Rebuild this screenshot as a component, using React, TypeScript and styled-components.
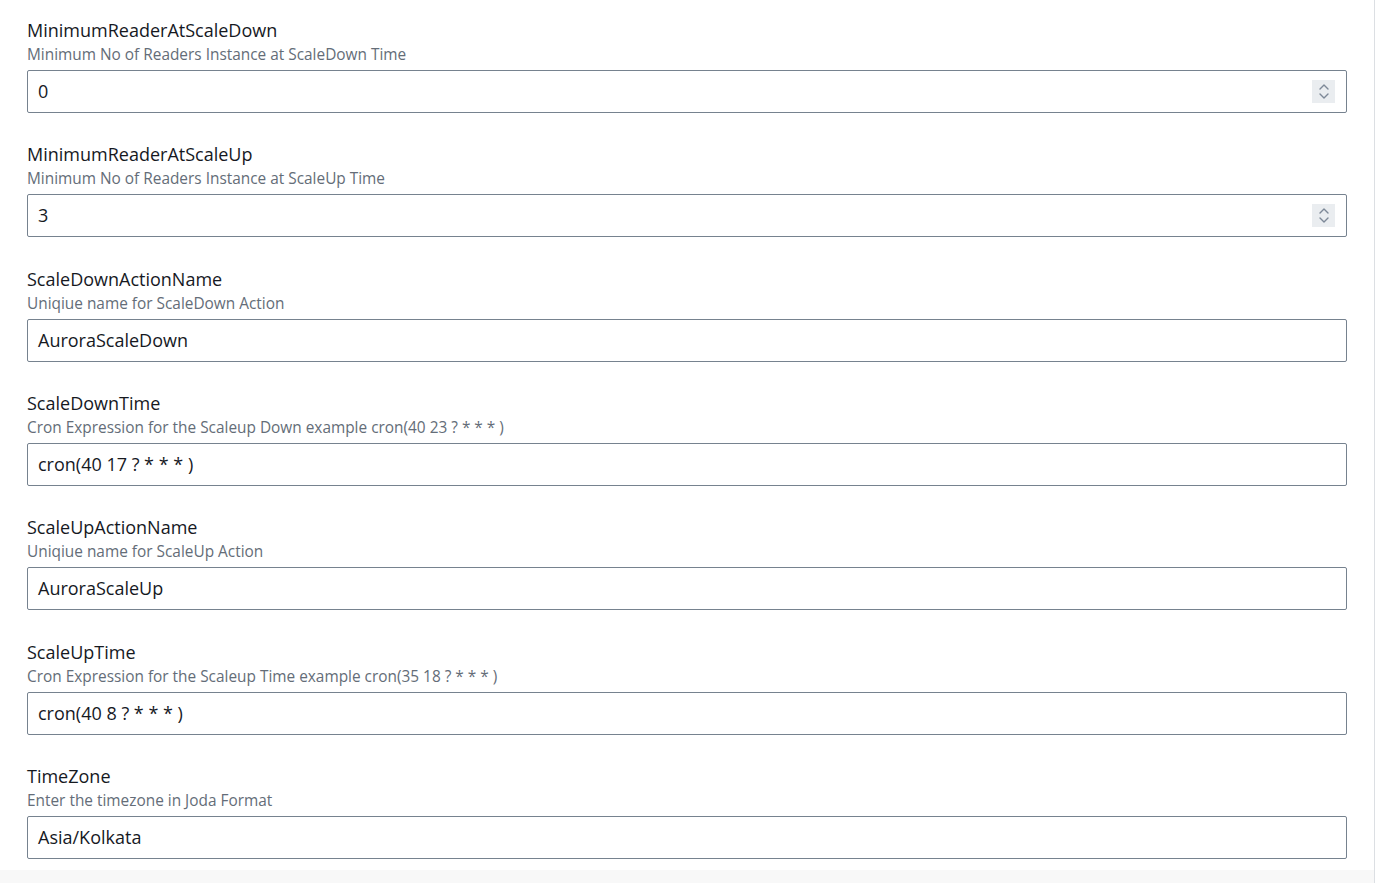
import styled, { createGlobalStyle } from "styled-components";

const GlobalStyle = createGlobalStyle`
  html, body {
    margin: 0;
    padding: 0;
    background: #ffffff;
  }
  body {
    font-family: "Open Sans", "Noto Sans", sans-serif;
    color: #16191f;
  }
`;

const Screen = styled.div`
  width: 1378px;
  height: 883px;
  display: flex;
  flex-direction: column;
  overflow: hidden;
`;

const Panel = styled.div`
  width: 1375px;
  height: 870px;
  flex-shrink: 0;
  border-right: 1px solid #dcdfe3;
  background: #ffffff;
  display: flex;
  flex-direction: column;
  padding: 19px 27px 0 27px;
  box-sizing: border-box;
`;

const Bottom = styled.div`
  width: 1375px;
  flex: 1;
  box-sizing: border-box;
  background: #f8f8f8;
  border-right: 1px solid #dcdfe3;
`;

const Field = styled.div`
  display: flex;
  flex-direction: column;
  margin-bottom: 30.33px;
`;

const Label = styled.div`
  font-size: 18px;
  line-height: 22px;
  color: #16191f;
`;

const Description = styled.div`
  font-size: 15.4px;
  line-height: 22px;
  margin-top: 3px;
  color: #646d78;
`;

const InputBox = styled.div`
  position: relative;
  margin-top: 4px;
  height: 43px;
  box-sizing: border-box;
  border: 1px solid #76828f;
  border-radius: 2px;
  display: flex;
  align-items: center;
  padding: 0 10px 1px;
  font-size: 18px;
  color: #16191f;
`;

const Spinner = styled.div`
  position: absolute;
  right: 11px;
  top: 9px;
  width: 23px;
  height: 23px;
  background: #eaedf0;
  display: flex;
  flex-direction: column;
  align-items: center;
  justify-content: center;
  gap: 3px;
`;

const Chevron = ({ up }: { up?: boolean }) => (
  <svg width="10" height="6" viewBox="0 0 10 6">
    <path
      d={up ? "M1 5 L5 1 L9 5" : "M1 1 L5 5 L9 1"}
      fill="none"
      stroke="#7d8998"
      strokeWidth="1.4"
      strokeLinecap="round"
      strokeLinejoin="round"
    />
  </svg>
);

type FieldDef = {
  name: string;
  desc: string;
  value: string;
  numeric?: boolean;
};

const fields: FieldDef[] = [
  {
    name: "MinimumReaderAtScaleDown",
    desc: "Minimum No of Readers Instance at ScaleDown Time",
    value: "0",
    numeric: true,
  },
  {
    name: "MinimumReaderAtScaleUp",
    desc: "Minimum No of Readers Instance at ScaleUp Time",
    value: "3",
    numeric: true,
  },
  {
    name: "ScaleDownActionName",
    desc: "Uniqiue name for ScaleDown Action",
    value: "AuroraScaleDown",
  },
  {
    name: "ScaleDownTime",
    desc: "Cron Expression for the Scaleup Down example cron(40 23 ? * * * )",
    value: "cron(40 17 ? * * * )",
  },
  {
    name: "ScaleUpActionName",
    desc: "Uniqiue name for ScaleUp Action",
    value: "AuroraScaleUp",
  },
  {
    name: "ScaleUpTime",
    desc: "Cron Expression for the Scaleup Time example cron(35 18 ? * * * )",
    value: "cron(40 8 ? * * * )",
  },
  {
    name: "TimeZone",
    desc: "Enter the timezone in Joda Format",
    value: "Asia/Kolkata",
  },
];

const App = () => {
  return (
    <Screen>
      <GlobalStyle />
      <Panel>
        {fields.map((f) => (
          <Field key={f.name}>
            <Label>{f.name}</Label>
            <Description>{f.desc}</Description>
            <InputBox>
              {f.value}
              {f.numeric && (
                <Spinner>
                  <Chevron up />
                  <Chevron />
                </Spinner>
              )}
            </InputBox>
          </Field>
        ))}
      </Panel>
      <Bottom />
    </Screen>
  );
};

export default App;
